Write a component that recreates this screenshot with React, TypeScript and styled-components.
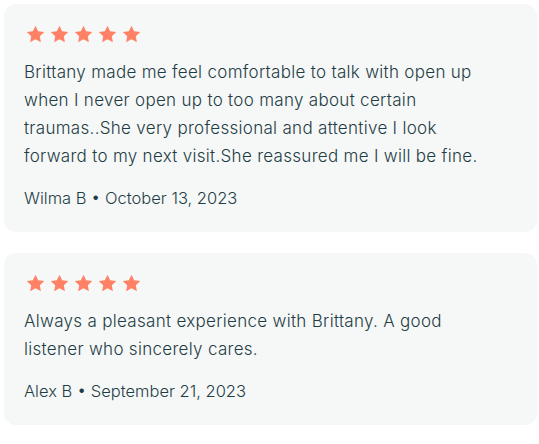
import styled, { createGlobalStyle } from 'styled-components';

const GlobalStyle = createGlobalStyle`
  body {
    margin: 0;
    background: #ffffff;
    font-family: Inter, 'Liberation Sans', sans-serif;
  }
`;

interface Review {
  id: number;
  text: string;
  author: string;
  date: string;
  rating: number;
}

const REVIEWS: Review[] = [
  {
    id: 1,
    text: 'Brittany made me feel comfortable to talk with open up when I never open up to too many about certain traumas..She very professional and attentive I look forward to my next visit.She reassured me I will be fine.',
    author: 'Wilma B',
    date: 'October 13, 2023',
    rating: 5,
  },
  {
    id: 2,
    text: 'Always a pleasant experience with Brittany. A good listener who sincerely cares.',
    author: 'Alex B',
    date: 'September 21, 2023',
    rating: 5,
  },
];

const List = styled.div`
  display: flex;
  flex-direction: column;
  gap: 21px;
  padding: 4px 2px 0 4px;
`;

const Card = styled.article`
  background: #f6f8f8;
  border-radius: 12px;
  padding: 20px;
  color: #1f3d44;
  font-weight: 350;
  line-height: 28px;
`;

const Stars = styled.div`
  display: flex;
  gap: 5px;
  padding-left: 2px;
  height: 20px;
  align-items: center;
`;

const Body = styled.p`
  margin: 14px 0 0;
  max-width: 462px;
  font-size: 17px;
  letter-spacing: 0.3px;
`;

const Meta = styled.div`
  margin-top: 14px;
  font-size: 16.5px;
`;

const Star = () => (
  <svg width="19" height="18" viewBox="0 0 24 23">
    <path
      d="M12 0.8l3.4 7.1 7.8 1-5.7 5.4 1.4 7.7L12 18.3 5.1 22l1.4-7.7L0.8 8.9l7.8-1z"
      fill="#ff8266"
    />
  </svg>
);

export default function App() {
  return (
    <>
      <GlobalStyle />
      <List>
        {REVIEWS.map((review) => (
          <Card key={review.id}>
            <Stars>
              {Array.from({ length: review.rating }).map((_, i) => (
                <Star key={i} />
              ))}
            </Stars>
            <Body>{review.text}</Body>
            <Meta>
              {review.author} • {review.date}
            </Meta>
          </Card>
        ))}
      </List>
    </>
  );
}
